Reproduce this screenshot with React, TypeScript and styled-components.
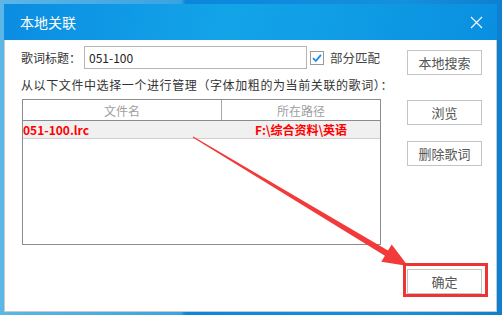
import styled, { createGlobalStyle } from 'styled-components';

const GlobalStyle = createGlobalStyle`
  html, body {
    margin: 0;
    padding: 0;
  }
  body {
    width: 502px;
    height: 315px;
    overflow: hidden;
    font-family: "Noto Sans CJK SC", "Noto Sans", sans-serif;
  }
`;

const Desktop = styled.div`
  position: relative;
  width: 502px;
  height: 315px;
  padding: 4px 0 0 4px;
  box-sizing: border-box;
  background: linear-gradient(90deg, #5cb6e6 0%, #3aa3e2 36%, #0a86dc 37%, #1590de 80%, #0f7fd0 100%);
`;

const Dialog = styled.div`
  width: 493px;
  height: 308px;
  display: flex;
  flex-direction: column;
  background: #fff;
  border: 1px solid #c9c9c9;
  border-top: none;
  box-sizing: border-box;
`;

const TitleBar = styled.div`
  height: 36px;
  flex-shrink: 0;
  display: flex;
  align-items: center;
  justify-content: space-between;
  padding: 0 14px 0 16px;
  margin: 0 -1px;
  background: linear-gradient(100deg, #0b8de2 0%, #13a4e8 45%, #0f9ce5 70%, #0a8fe0 100%);
  color: #fff;
  font-size: 14px;
`;

const Body = styled.div`
  flex: 1;
  display: flex;
  padding: 6px 0 0 16px;
`;

const LeftCol = styled.div`
  width: 360px;
  flex-shrink: 0;
  display: flex;
  flex-direction: column;
`;

const RightCol = styled.div`
  display: flex;
  flex-direction: column;
  margin-left: 26px;
  width: 76px;
`;

const TitleRow = styled.div`
  display: flex;
  align-items: center;
  height: 23px;
  font-size: 12px;
  color: #333;
  white-space: nowrap;
`;

const Label = styled.span`
  width: 63px;
  flex-shrink: 0;
`;

const Input = styled.div`
  width: 223px;
  flex-shrink: 0;
  height: 23px;
  box-sizing: border-box;
  border: 1px solid #b5b5b5;
  padding: 0 4px;
  display: flex;
  align-items: center;
  font-size: 12px;
  color: #222;
`;

const Check = styled.div`
  display: flex;
  align-items: center;
  flex-shrink: 0;
  margin-left: 3px;
  gap: 6px;
  color: #444;
  font-size: 12.5px;
`;

const Hint = styled.div`
  margin-top: 7px;
  height: 17px;
  line-height: 17px;
  font-size: 12px;
  letter-spacing: 0.6px;
  color: #333;
  white-space: nowrap;
`;

const Table = styled.div`
  margin: 6px 0 0 1px;
  width: 359px;
  height: 146px;
  box-sizing: border-box;
  border: 1px solid #8c8c8c;
`;

const HeaderRow = styled.div`
  display: grid;
  grid-template-columns: 199px 1fr;
  height: 20px;
  border-bottom: 1px solid #8c8c8c;
  font-size: 12px;
  color: #a0a0a0;
`;

const HeaderCell = styled.div<{ $sep?: boolean }>`
  display: flex;
  align-items: center;
  justify-content: center;
  border-right: ${p => (p.$sep ? '1px solid #a8a8a8' : 'none')};
`;

const DataRow = styled.div`
  display: grid;
  grid-template-columns: 199px 1fr;
  height: 17px;
  background: #f0f0f0;
  border-bottom: 1px solid #cfcfcf;
  font-size: 12px;
  font-weight: bold;
  color: #ff0000;
`;

const DataCell = styled.div<{ $center?: boolean }>`
  display: flex;
  align-items: center;
  justify-content: ${p => (p.$center ? 'center' : 'flex-start')};
  white-space: nowrap;
`;

const Button = styled.div<{ $top: number; $auto?: boolean }>`
  margin-top: ${p => (p.$auto ? 'auto' : `${p.$top}px`)};
  margin-bottom: ${p => (p.$auto ? '17px' : '0')};
  width: 75px;
  height: 25px;
  box-sizing: border-box;
  border: 1px solid #c4c4c4;
  display: flex;
  align-items: center;
  justify-content: center;
  font-size: 13px;
  color: #555;
  background: #fff;
`;

const Overlay = styled.svg`
  position: absolute;
  left: 0;
  top: 0;
  pointer-events: none;
`;

export default function App() {
  return (
    <Desktop>
      <GlobalStyle />
      <Dialog>
        <TitleBar>
          <span>本地关联</span>
          <svg width="13" height="13" viewBox="0 0 13 13">
            <path d="M1 1 L12 12 M12 1 L1 12" stroke="#fff" strokeWidth="1.1" />
          </svg>
        </TitleBar>
        <Body>
          <LeftCol>
            <TitleRow>
              <Label>歌词标题：</Label>
              <Input>051-100</Input>
              <Check>
                <svg width="14" height="14" viewBox="0 0 14 14">
                  <rect x="0.5" y="0.5" width="13" height="13" fill="#fff" stroke="#9a9a9a" />
                  <path d="M3 7.2 L5.8 10 L11 3.8" fill="none" stroke="#1a8ee6" strokeWidth="1.8" />
                </svg>
                <span>部分匹配</span>
              </Check>
            </TitleRow>
            <Hint>从以下文件中选择一个进行管理（字体加粗的为当前关联的歌词）：</Hint>
            <Table>
              <HeaderRow>
                <HeaderCell $sep>文件名</HeaderCell>
                <HeaderCell>所在路径</HeaderCell>
              </HeaderRow>
              <DataRow>
                <DataCell>051-100.lrc</DataCell>
                <DataCell $center>F:\综合资料\英语</DataCell>
              </DataRow>
            </Table>
          </LeftCol>
          <RightCol>
            <Button $top={4}>本地搜索</Button>
            <Button $top={25}>浏览</Button>
            <Button $top={16}>删除歌词</Button>
            <Button $top={0} $auto>确定</Button>
          </RightCol>
        </Body>
      </Dialog>
      <Overlay width="502" height="315" viewBox="0 0 502 315">
        <polygon
          points="192.7,137.4 384.9,255.7 381.3,261.7 408,266 391.7,244.5 388,250.5 193.3,136.6"
          fill="#f23a3a"
        />
        <rect x="404.5" y="264.5" width="82" height="31" fill="none" stroke="#ee3333" strokeWidth="3" />
      </Overlay>
    </Desktop>
  );
}
